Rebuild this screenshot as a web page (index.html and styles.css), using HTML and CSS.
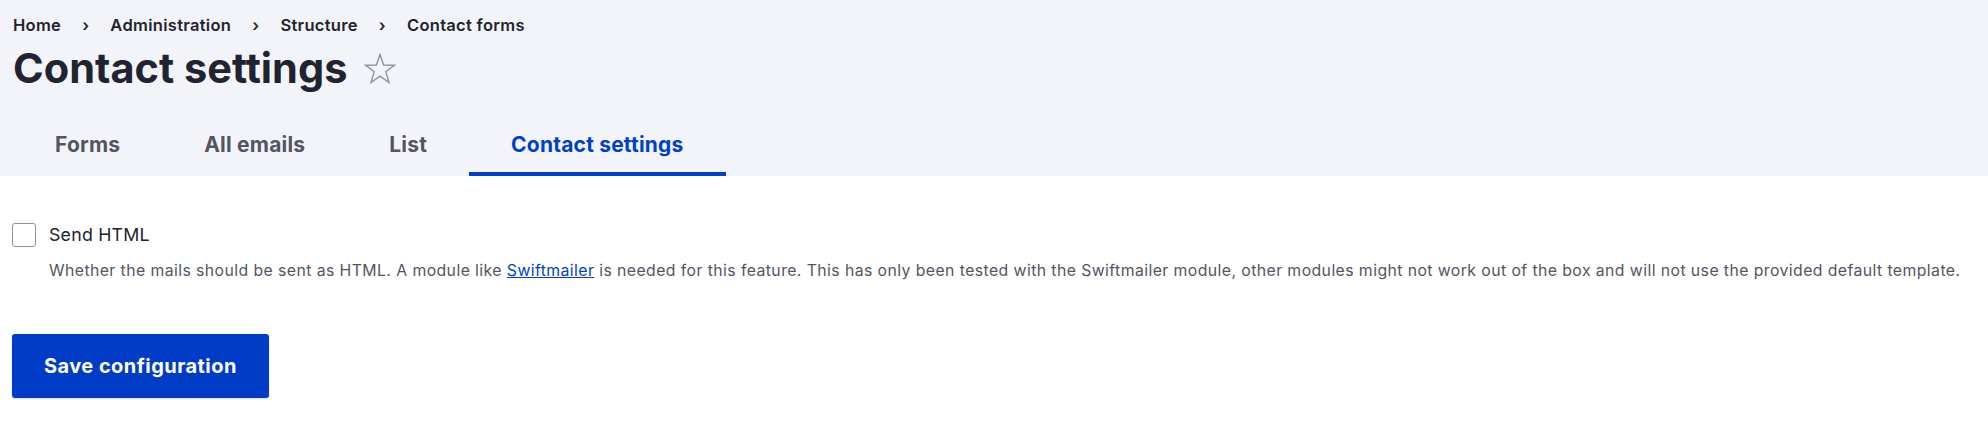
FILE: index.html
```html
<!DOCTYPE html>
<html lang="en">
<head>
<meta charset="utf-8">
<title>Contact settings</title>
<link rel="stylesheet" href="styles.css">
</head>
<body>
<header class="region-header">
  <nav class="breadcrumb" aria-label="Breadcrumb">
    <ol class="breadcrumb-list">
      <li class="breadcrumb-item"><a href="#">Home</a></li>
      <li class="breadcrumb-item"><a href="#">Administration</a></li>
      <li class="breadcrumb-item"><a href="#">Structure</a></li>
      <li class="breadcrumb-item"><a href="#">Contact forms</a></li>
    </ol>
  </nav>
  <div class="title-row">
    <h1 class="page-title">Contact settings</h1>
    <a href="#" class="shortcut" aria-label="Add to shortcuts">
      <svg class="star" viewBox="0 0 32 32" width="32" height="32" aria-hidden="true">
        <polygon points="16,1.5 19.6,12 30.5,12.2 21.8,18.8 25,29.5 16,23.1 7,29.5 10.2,18.8 1.5,12.2 12.4,12" fill="none" stroke="#8e929c" stroke-width="1.4" stroke-linejoin="miter"/>
      </svg>
    </a>
  </div>
  <nav class="tabs-wrap">
    <ul class="tabs">
      <li class="tab"><a href="#" class="tab-link">Forms</a></li>
      <li class="tab"><a href="#" class="tab-link">All emails</a></li>
      <li class="tab"><a href="#" class="tab-link">List</a></li>
      <li class="tab"><a href="#" class="tab-link is-active">Contact settings</a></li>
    </ul>
  </nav>
</header>
<main class="content">
  <form class="settings-form">
    <div class="form-item">
      <div class="checkbox-row">
        <input type="checkbox" id="send-html" class="checkbox">
        <label for="send-html" class="checkbox-label">Send HTML</label>
      </div>
      <div class="description">Whether the mails should be sent as HTML. A module like <a href="#" class="link">Swiftmailer</a> is needed for this feature. This has only been tested with the Swiftmailer module, other modules might not work out of the box and will not use the provided default template.</div>
    </div>
    <div class="form-actions">
      <button type="button" class="button-primary">Save configuration</button>
    </div>
  </form>
</main>
</body>
</html>
```

FILE: styles.css
```css
* { box-sizing: border-box; }

html, body {
  margin: 0;
  padding: 0;
  background: #ffffff;
  font-family: Inter, "Noto Sans", "DejaVu Sans", sans-serif;
  color: #222330;
}

a { color: inherit; text-decoration: none; }

.region-header {
  background: #f3f4f9;
  padding: 15px 0 0 13px;
}

.breadcrumb-list {
  list-style: none;
  margin: 0;
  padding: 0;
  display: flex;
  font-size: 16.5px;
  line-height: 20px;
  font-weight: 600;
  letter-spacing: 0.3px;
  color: #222330;
}

.breadcrumb-item + .breadcrumb-item::before {
  content: "\203A";
  display: inline-block;
  padding: 0 21px 0 21px;
  font-weight: 600;
}

.title-row {
  display: flex;
  align-items: center;
  margin-top: 8px;
  height: 50px;
}

.page-title {
  margin: 0;
  font-size: 41.5px;
  line-height: 50px;
  font-weight: 700;
  letter-spacing: 0;
  color: #222330;
}

.shortcut {
  display: flex;
  margin-left: 17px;
  margin-top: 2px;
}

.star { display: block; }

.tabs-wrap {
  margin-top: 23px;
  margin-left: -13px;
}

.tabs {
  list-style: none;
  margin: 0;
  padding: 0 0 0 13px;
  display: flex;
}

.tab-link {
  position: relative;
  display: flex;
  align-items: center;
  height: 60px;
  padding: 0 42px 4px 42px;
  font-size: 21px;
  font-weight: 700;
  letter-spacing: 0.2px;
  color: #545560;
}

.tab-link.is-active {
  color: #003ecc;
}

.tab-link.is-active::after {
  content: "";
  position: absolute;
  left: 0;
  right: 0;
  bottom: 0;
  height: 4px;
  background: #003ecc;
}

.content {
  padding: 47px 12px 40px 12px;
}

.checkbox-row {
  display: flex;
  align-items: center;
  height: 24px;
}

.checkbox {
  appearance: none;
  -webkit-appearance: none;
  margin: 0;
  width: 24px;
  height: 24px;
  border: 1px solid #8e929c;
  border-radius: 3px;
  background: #fff;
}

.checkbox-label {
  margin-left: 13px;
  font-size: 17.8px;
  line-height: 24px;
  letter-spacing: 0.2px;
  color: #222330;
}

.description {
  margin-top: 14px;
  padding-left: 37px;
  font-size: 15.8px;
  line-height: 20px;
  letter-spacing: 0.42px;
  color: #545560;
}

.link {
  color: #003ecc;
  text-decoration: underline;
}

.form-actions {
  margin-top: 53px;
}

.button-primary {
  display: inline-flex;
  align-items: center;
  justify-content: center;
  height: 64px;
  padding: 0 32px;
  border: 0;
  border-radius: 3px;
  background: #003cc5;
  color: #ffffff;
  font-family: Inter, "Noto Sans", sans-serif;
  font-size: 20px;
  font-weight: 700;
  letter-spacing: 0.45px;
  box-shadow: 0 1px 2px rgba(0, 0, 0, 0.15);
}
```
